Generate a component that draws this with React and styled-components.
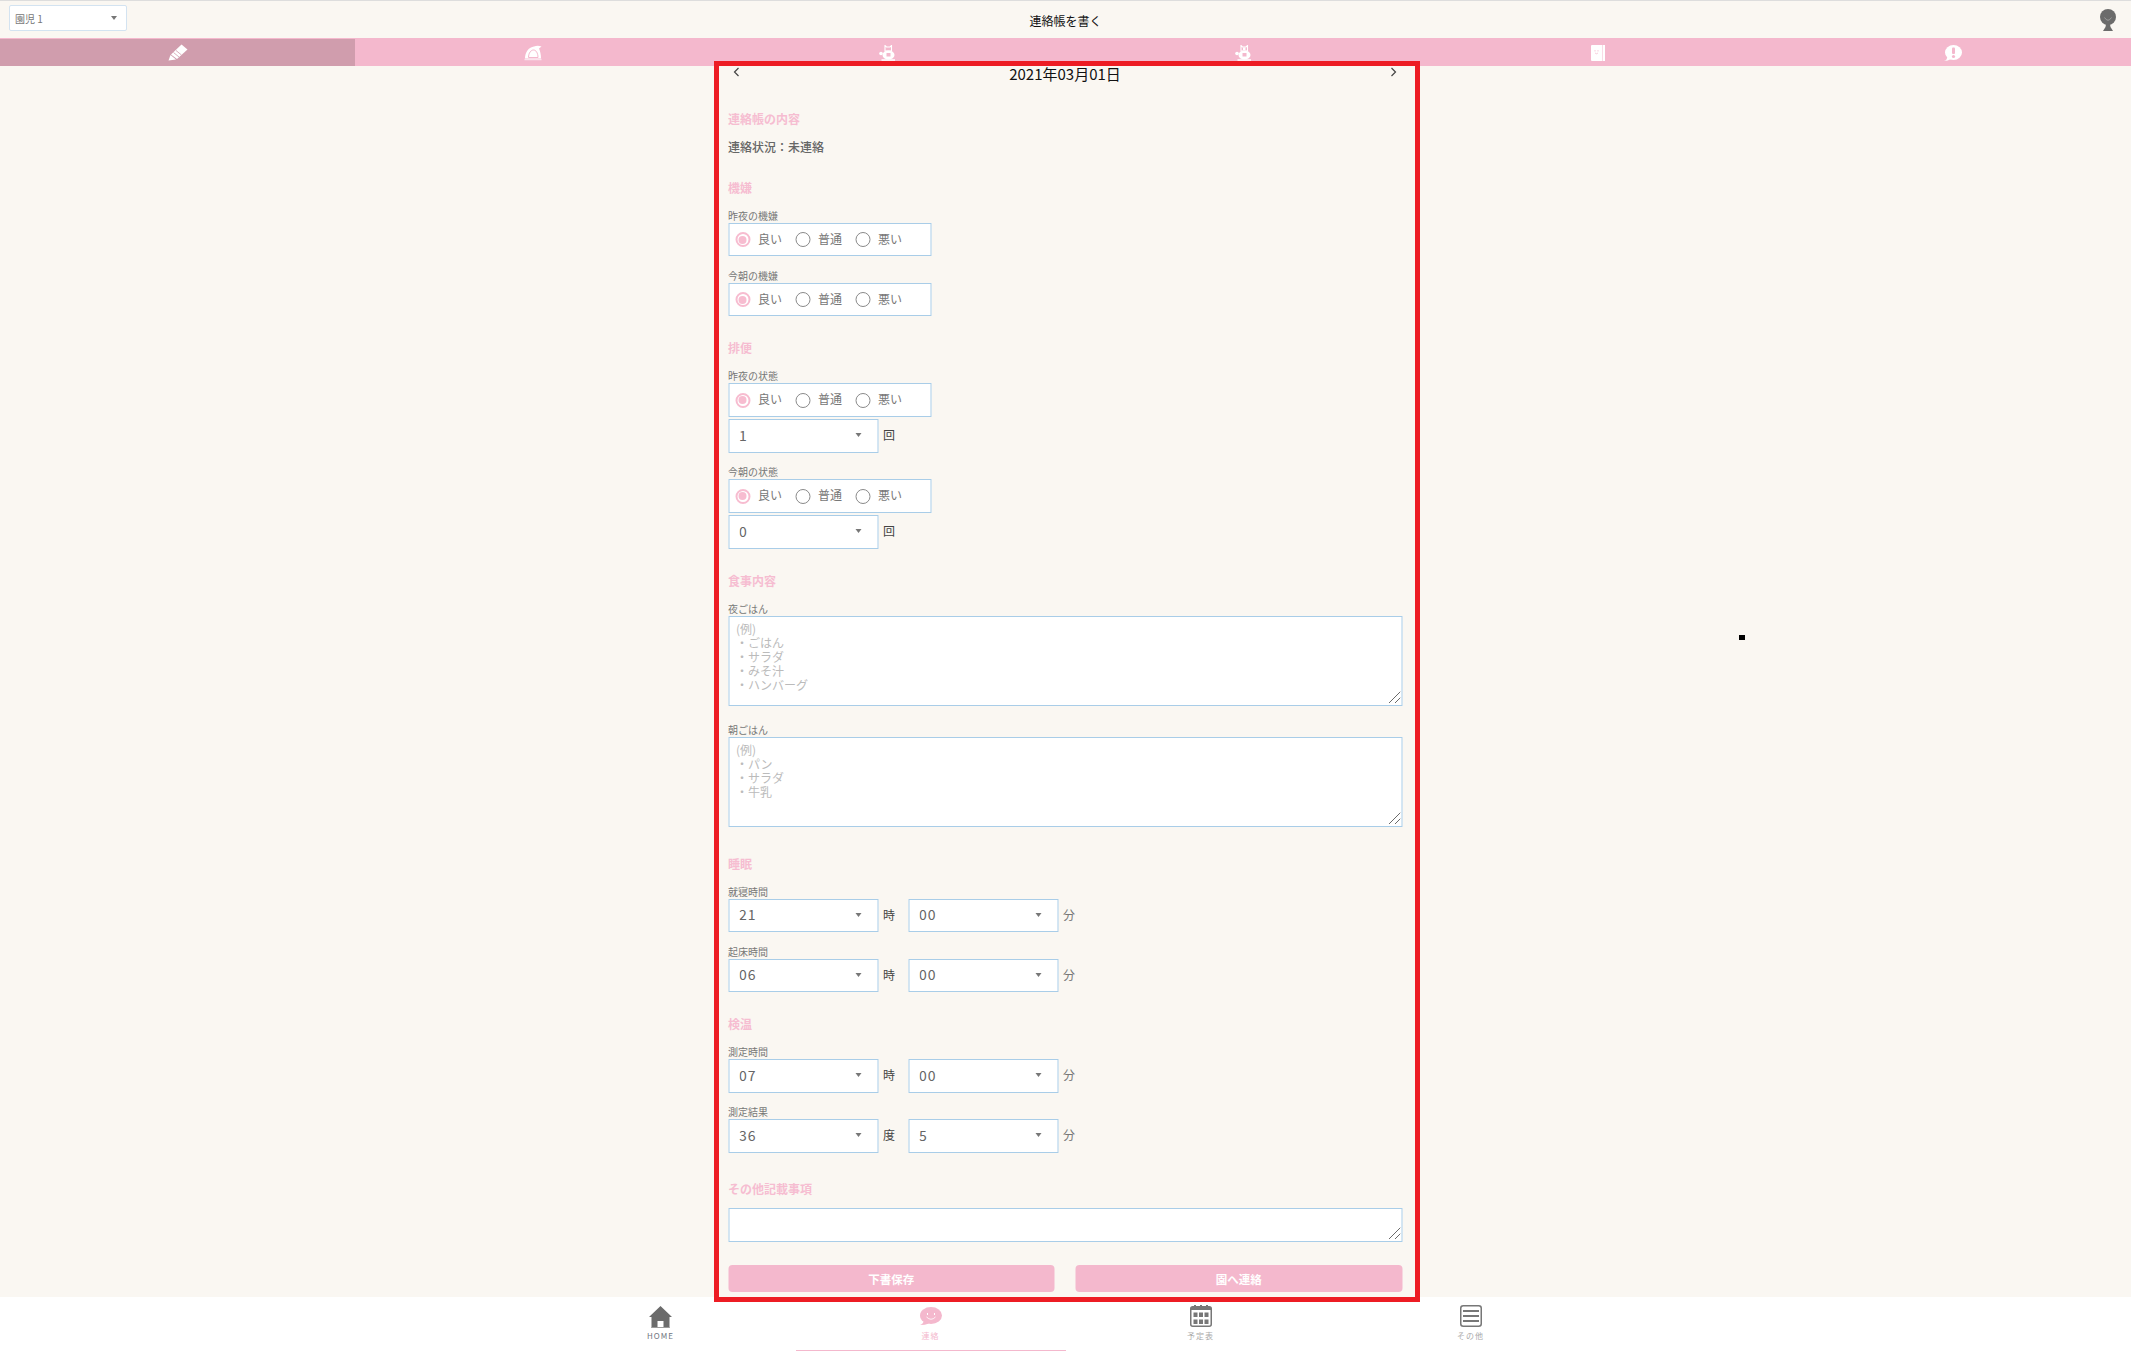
import React from "react"
import styled, { createGlobalStyle } from "styled-components"

const GlobalStyle = createGlobalStyle`
  html, body {
    margin: 0;
    padding: 0;
    background: #faf7f2;
  }
  body, select, textarea, button {
    font-family: "Noto Sans CJK JP", "Noto Sans", sans-serif;
  }
`

const Page = styled.div`
  position: relative;
  display: flex;
  flex-direction: column;
  width: 2131px;
  height: 1351px;
  overflow: hidden;
  background: #faf7f2;
`

const TopBar = styled.header`
  position: relative;
  display: flex;
  align-items: center;
  justify-content: space-between;
  box-sizing: border-box;
  height: 38px;
  padding: 0 15px 0 9px;
  border-top: 1px solid #dddddd;
`

const ChildSelect = styled.div`
  display: flex;
  align-items: center;
  justify-content: space-between;
  box-sizing: border-box;
  width: 118px;
  height: 26px;
  padding: 0 9px 0 5px;
  margin-top: -3px;
  border: 1px solid #d3e3f1;
  border-radius: 2px;
  background: #ffffff;
  font-size: 10px;
  color: #777777;
`

const PageTitle = styled.h1`
  position: absolute;
  left: 0;
  right: 0;
  top: 11px;
  margin: 0;
  text-align: center;
  font-size: 12px;
  line-height: 17px;
  font-weight: 400;
  color: #111111;
`

const TabBar = styled.nav`
  display: flex;
  height: 28px;
  background: #f4b8cd;
`

const Tab = styled.div`
  flex: 1;
  display: flex;
  align-items: center;
  justify-content: center;
  margin-top: 1px;
  background: ${(p) => (p.$active ? "#d09dad" : "transparent")};
`

const Main = styled.main`
  flex: 1;
  box-sizing: border-box;
  width: 674px;
  margin: 0 auto;
  transform: translateX(-0.5px);
`

const DateRow = styled.div`
  display: flex;
  align-items: flex-start;
  justify-content: space-between;
  height: 42px;
  padding: 0 4px;
`

const DateText = styled.div`
  font-size: 15px;
  line-height: 15px;
  color: #111111;
`

const Chevron = styled.span`
  display: block;
  height: 12px;
  padding-top: 1px;
  color: #444444;
  svg {
    display: block;
  }
`

const Section = styled.section`
  margin-bottom: ${(p) => p.$after ?? 21}px;
`

const Heading = styled.h2`
  margin: 0 0 ${(p) => p.$after ?? 11}px;
  font-size: 12px;
  line-height: 21px;
  font-weight: 700;
  color: #f6bdd1;
`

const Status = styled.p`
  margin: 0 0 23px;
  font-size: 12px;
  line-height: 14px;
  font-weight: 500;
  color: #666666;
`

const Field = styled.div`
  margin-bottom: ${(p) => p.$after ?? 12}px;
  &:last-child {
    margin-bottom: 0;
  }
`

const Label = styled.label`
  display: block;
  height: 14px;
  font-size: 10px;
  line-height: 13px;
  color: #777777;
`

const RadioBox = styled.div`
  display: flex;
  align-items: center;
  box-sizing: border-box;
  width: 203px;
  height: ${(p) => p.$h ?? 34}px;
  padding-left: 6px;
  border: 1px solid #a9cde8;
  background: #ffffff;
`

const RadioItem = styled.div`
  display: flex;
  align-items: center;
  width: 60px;
  font-size: 12px;
  line-height: 14px;
  color: #777777;
`

const RadioText = styled.span`
  margin-top: -2px;
`

const RadioDot = styled.span`
  position: relative;
  box-sizing: border-box;
  width: 15px;
  height: 15px;
  margin-right: 8px;
  border-radius: 50%;
  border: ${(p) => (p.$on ? "2px solid #f7bcd0" : "1.5px solid #8a8a8a")};
  &::after {
    content: "";
    display: ${(p) => (p.$on ? "block" : "none")};
    position: absolute;
    inset: 1.5px;
    border-radius: 50%;
    background: #f7bcd0;
  }
`

const Row = styled.div`
  display: flex;
  align-items: center;
  margin-top: ${(p) => p.$top ?? 0}px;
`

const SelectWrap = styled.div`
  position: relative;
  width: 150px;
  height: ${(p) => p.$h ?? 34}px;
  &::after {
    content: "";
    position: absolute;
    right: 17px;
    top: 14px;
    border-left: 3.5px solid transparent;
    border-right: 3.5px solid transparent;
    border-top: 4px solid #777777;
  }
`

const NativeSelect = styled.select`
  appearance: none;
  box-sizing: border-box;
  width: 100%;
  height: 100%;
  padding: 0 0 3px 10px;
  border: 1px solid #a9cde8;
  border-radius: 0;
  background: #ffffff;
  font-size: 14px;
  letter-spacing: 1px;
  color: #666666;
  outline: none;
`

const Unit = styled.span`
  width: 12px;
  margin: -2px 13px 0 5px;
  font-size: 12px;
  line-height: 14px;
  color: ${(p) => (p.$soft ? "#777777" : "#444444")};
`

const MemoWrap = styled.div`
  position: relative;
  height: ${(p) => p.$h}px;
`

const Memo = styled.textarea`
  display: block;
  box-sizing: border-box;
  width: 100%;
  height: 100%;
  padding: 5px 7px;
  margin: 0;
  border: 1px solid #a9cde8;
  border-radius: 0;
  background: #ffffff;
  font-size: 12px;
  line-height: 14px;
  outline: none;
  resize: none;
  &::placeholder {
    color: #bbbbbb;
    opacity: 1;
  }
`

const Grip = styled.svg`
  position: absolute;
  right: 2px;
  bottom: 3px;
  width: 12px;
  height: 12px;
  pointer-events: none;
`

const Buttons = styled.div`
  display: flex;
  gap: 21px;
  margin-top: 23px;
`

const PinkButton = styled.button`
  flex: 1;
  height: 27px;
  padding: 0;
  border: 0;
  border-radius: 4px;
  background: #f4b8cd;
  font-size: 11.5px;
  font-weight: 700;
  color: #ffffff;
`

const Footer = styled.footer`
  display: flex;
  justify-content: center;
  height: 54px;
  background: #ffffff;
`

const FooterItem = styled.div`
  display: flex;
  flex-direction: column;
  align-items: center;
  box-sizing: border-box;
  width: 270px;
  padding-top: 8px;
  border-bottom: ${(p) => (p.$active ? "1px solid #f4b8cd" : "0")};
`

const FooterIcon = styled.div`
  display: flex;
  align-items: flex-start;
  justify-content: center;
  box-sizing: border-box;
  height: 25px;
  padding-top: ${(p) => p.$top ?? 0}px;
`

const FooterLabel = styled.span`
  font-size: 8px;
  line-height: 12px;
  letter-spacing: 1px;
  color: ${(p) => (p.$active ? "#f4b8cd" : p.$strong ? "#6f7480" : "#aaaaaa")};
`

// the red marker drawn over the screenshot
const Marker = styled.div`
  position: absolute;
  left: 714px;
  top: 61px;
  width: 706px;
  height: 1241px;
  box-sizing: border-box;
  border: 5px solid #ed1c24;
  pointer-events: none;
`

const Speck = styled.div`
  position: absolute;
  left: 1739px;
  top: 635px;
  width: 6px;
  height: 5px;
  background: #000000;
`

const PencilIcon = () => (
  <svg width="20" height="17" viewBox="0 0 20 17">
    <path d="M13.5 0.5 L19.5 5.5 L9 15 L3 10.5 Z" fill="#fff" />
    <path d="M2.5 11 L8 15.5 L0.5 16.5 Z" fill="#fff" />
    <path d="M5.5 8.5 L11 13 M8 6.5 L13.5 11" stroke="#d09dad" strokeWidth="0.8" />
  </svg>
)

const CapIcon = () => (
  <svg width="18" height="16" viewBox="0 0 18 16">
    <path d="M1 13.5 C1 7 5 2 10 1.5 C12.5 0.5 15 0.5 17.5 1.5 L15 3.5 C16 6 17 9 17 13.5 Z" fill="#fff" />
    <path d="M4.5 12.5 C4.5 8 7 5 9.5 5 C12 5 14 8 14 12.5 Z" fill="none" stroke="#f4b8cd" strokeWidth="1" />
    <path d="M0.5 14.5 H17.5" stroke="#fbe3ec" strokeWidth="1.5" />
  </svg>
)

const BearIcon = ({ ears }) => (
  <svg width="17" height="16" viewBox="0 0 17 16">
    <path d="M6 0.5 V6 H12.5 V0.5 L11 2 H7.5 Z" fill="none" stroke="#fff" strokeWidth="1.1" />
    {ears && <rect x="8" y="2.5" width="2.5" height="2.5" fill="#fff" />}
    <ellipse cx="9.5" cy="10" rx="6" ry="4.5" fill="#fff" />
    <circle cx="2" cy="8.5" r="1.8" fill="#fff" />
    <rect x="7.5" y="8" width="4" height="3.5" fill="#f4b8cd" />
    <path d="M2.5 15 H16" stroke="#fff" strokeWidth="1.5" />
  </svg>
)

const NotebookIcon = () => (
  <svg width="14" height="16" viewBox="0 0 14 16">
    <path d="M0 1 Q0 0 1 0 H14 V16 H1 Q0 16 0 15 Z" fill="#fff" />
    <path d="M11.5 0 V16" stroke="#f9dbe6" strokeWidth="1" />
    <path d="M4 5 V6.5 M7 5 V6.5 M4 8 Q5.5 9.5 7 8" stroke="#f4b8cd" strokeWidth="0.7" fill="none" />
  </svg>
)

const AlertIcon = () => (
  <svg width="18" height="16" viewBox="0 0 18 16">
    <ellipse cx="9.5" cy="7.5" rx="8.5" ry="7.5" fill="#fff" />
    <path d="M0 16 Q3 15 3.5 12 L7 14 Q4 16 0 16 Z" fill="#fff" />
    <rect x="8" y="2.5" width="3" height="6.5" rx="1" fill="#f4b8cd" />
    <circle cx="9.5" cy="11.5" r="1.6" fill="#f4b8cd" />
  </svg>
)

const AvatarIcon = () => (
  <svg width="16" height="22" viewBox="0 0 16 22">
    <ellipse cx="8" cy="8" rx="8" ry="8" fill="#6b6b6b" />
    <path d="M6 15 H10 L10.5 18 L13 22 H3 L5.5 18 Z" fill="#6b6b6b" />
    <path d="M4.5 8.5 Q8 14 11.5 8.5" fill="none" stroke="#a8a8a8" strokeWidth="0.8" />
  </svg>
)

const HomeIcon = () => (
  <svg width="23" height="22" viewBox="0 0 23 22">
    <path d="M11.5 0 L23 11 L20.5 11 L20.5 22 L14.5 22 L14.5 15 L8.5 15 L8.5 22 L2.5 22 L2.5 11 L0 11 Z" fill="#6b6b6b" />
    <path d="M2.5 21.5 H20.5" stroke="#9a9a9a" strokeWidth="1" />
  </svg>
)

const ChatIcon = () => (
  <svg width="22" height="18" viewBox="0 0 22 18">
    <ellipse cx="11" cy="8.5" rx="11" ry="8.5" fill="#f4b8cd" />
    <path d="M0 18 Q3.5 17 4 13 L9 16.5 Q5 18 0 18 Z" fill="#f4b8cd" />
    <path d="M7.5 6 V8 M14.5 6 V8" stroke="#fff" strokeWidth="1" />
    <path d="M6.5 10 Q11 14.5 15.5 10" fill="none" stroke="#fff" strokeWidth="0.8" />
  </svg>
)

const CalendarIcon = () => (
  <svg width="22" height="22" viewBox="0 0 22 22">
    <rect x="0.75" y="1.75" width="20.5" height="19.5" rx="2" fill="#fff" stroke="#777" strokeWidth="1.5" />
    <path d="M0.75 4 Q0.75 1.75 3 1.75 H19 Q21.25 1.75 21.25 4 V5 H0.75 Z" fill="#777" />
    <path d="M5 0 V3 M11 0 V3 M17 0 V3" stroke="#777" strokeWidth="2" />
    {[7.5, 14.5].map((y) =>
      [3.5, 9, 14.5].map((x) => <rect key={x + "-" + y} x={x} y={y} width="4" height="4.5" fill="#777" />)
    )}
  </svg>
)

const MenuIcon = () => (
  <svg width="22" height="22" viewBox="0 0 22 22">
    <rect x="0.75" y="0.75" width="20.5" height="20.5" rx="2.5" fill="#fff" stroke="#777" strokeWidth="1.5" />
    <path d="M3 6 H19 M3 11 H19 M3 16 H19" stroke="#777" strokeWidth="2" />
  </svg>
)

const ChevronLeft = () => (
  <svg width="8" height="10" viewBox="0 0 8 10">
    <path d="M6 1 L2 5 L6 9" fill="none" stroke="#444" strokeWidth="1.2" />
  </svg>
)

const ChevronRight = () => (
  <svg width="8" height="10" viewBox="0 0 8 10">
    <path d="M2 1 L6 5 L2 9" fill="none" stroke="#444" strokeWidth="1.2" />
  </svg>
)

const Radios = ({ h }) => (
  <RadioBox $h={h}>
    {["良い", "普通", "悪い"].map((text, i) => (
      <RadioItem key={text}>
        <RadioDot $on={i === 0} />
        <RadioText>{text}</RadioText>
      </RadioItem>
    ))}
  </RadioBox>
)

const Dropdown = ({ value, h }) => (
  <SelectWrap $h={h}>
    <NativeSelect defaultValue={value}>
      <option>{value}</option>
    </NativeSelect>
  </SelectWrap>
)

const MemoField = ({ h, placeholder }) => (
  <MemoWrap $h={h}>
    <Memo placeholder={placeholder} />
    <Grip viewBox="0 0 12 12">
      <path d="M0.5 12 L12 0.5 M6.5 12 L12 6.5" stroke="#444" strokeWidth="0.8" />
    </Grip>
  </MemoWrap>
)

const TimeField = ({ label, first, mid, second, h, after }) => (
  <Field $after={after}>
    <Label>{label}</Label>
    <Row>
      <Dropdown value={first} h={h} />
      <Unit>{mid}</Unit>
      <Dropdown value={second} h={h} />
      <Unit $soft>分</Unit>
    </Row>
  </Field>
)

const ToiletField = ({ label, count }) => (
  <Field>
    <Label>{label}</Label>
    <Radios />
    <Row $top={2}>
      <Dropdown value={count} />
      <Unit>回</Unit>
    </Row>
  </Field>
)

const App = () => {
  return (
    <Page>
      <GlobalStyle />
      <TopBar>
        <ChildSelect>
          園児 1
          <svg width="6" height="4" viewBox="0 0 6 4"><path d="M0 0 H6 L3 4 Z" fill="#777" /></svg>
        </ChildSelect>
        <PageTitle>連絡帳を書く</PageTitle>
        <AvatarIcon />
      </TopBar>
      <TabBar>
        <Tab $active><PencilIcon /></Tab>
        <Tab><CapIcon /></Tab>
        <Tab><BearIcon /></Tab>
        <Tab><BearIcon ears /></Tab>
        <Tab><NotebookIcon /></Tab>
        <Tab><AlertIcon /></Tab>
      </TabBar>
      <Main>
        <DateRow>
          <Chevron><ChevronLeft /></Chevron>
          <DateText>2021年03月01日</DateText>
          <Chevron><ChevronRight /></Chevron>
        </DateRow>

        <Heading $after={11}>連絡帳の内容</Heading>
        <Status>連絡状況：未連絡</Status>

        <Section>
          <Heading>機嫌</Heading>
          <Field $after={13}><Label>昨夜の機嫌</Label><Radios h={33} /></Field>
          <Field><Label>今朝の機嫌</Label><Radios h={33} /></Field>
        </Section>

        <Section>
          <Heading>排便</Heading>
          <ToiletField label="昨夜の状態" count="1" />
          <ToiletField label="今朝の状態" count="0" />
        </Section>

        <Section $after={26}>
          <Heading>食事内容</Heading>
          <Field $after={17}>
            <Label>夜ごはん</Label>
            <MemoField h={90} placeholder={"(例)\n・ごはん\n・サラダ\n・みそ汁\n・ハンバーグ"} />
          </Field>
          <Field>
            <Label>朝ごはん</Label>
            <MemoField h={90} placeholder={"(例)\n・パン\n・サラダ\n・牛乳"} />
          </Field>
        </Section>

        <Section>
          <Heading>睡眠</Heading>
          <TimeField label="就寝時間" first="21" mid="時" second="00" h={33} after={13} />
          <TimeField label="起床時間" first="06" mid="時" second="00" h={33} />
        </Section>

        <Section $after={25}>
          <Heading>検温</Heading>
          <TimeField label="測定時間" first="07" mid="時" second="00" />
          <TimeField label="測定結果" first="36" mid="度" second="5" />
        </Section>

        <Heading $after={9}>その他記載事項</Heading>
        <MemoField h={34} />

        <Buttons>
          <PinkButton>下書保存</PinkButton>
          <PinkButton>園へ連絡</PinkButton>
        </Buttons>
      </Main>
      <Footer>
        <FooterItem>
          <FooterIcon $top={1}><HomeIcon /></FooterIcon>
          <FooterLabel $strong>HOME</FooterLabel>
        </FooterItem>
        <FooterItem $active>
          <FooterIcon $top={2}><ChatIcon /></FooterIcon>
          <FooterLabel $active>連絡</FooterLabel>
        </FooterItem>
        <FooterItem>
          <FooterIcon><CalendarIcon /></FooterIcon>
          <FooterLabel>予定表</FooterLabel>
        </FooterItem>
        <FooterItem>
          <FooterIcon><MenuIcon /></FooterIcon>
          <FooterLabel>その他</FooterLabel>
        </FooterItem>
      </Footer>
      <Marker />
      <Speck />
    </Page>
  )
}

export default App
